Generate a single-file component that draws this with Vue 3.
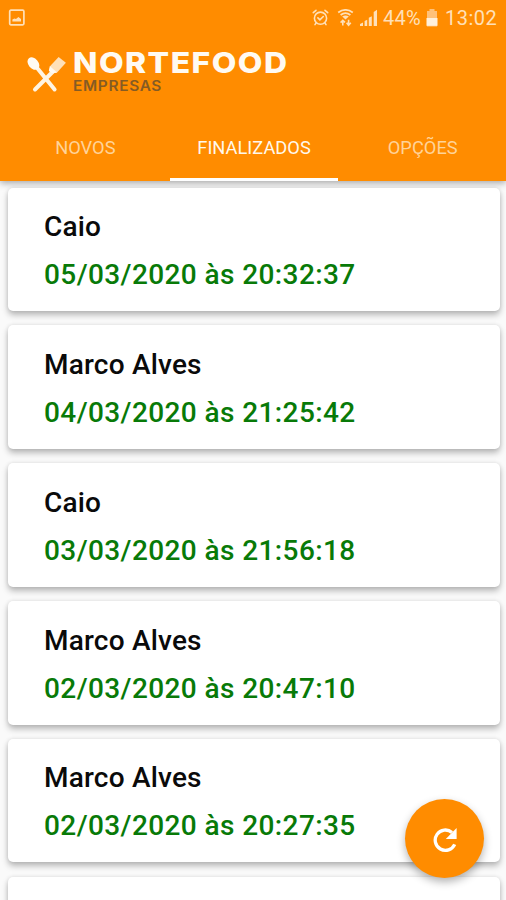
<script setup>
const tabs = [
  { label: 'NOVOS', active: false },
  { label: 'FINALIZADOS', active: true },
  { label: 'OPÇÕES', active: false },
]
const orders = [
  { name: 'Caio', date: '05/03/2020 às 20:32:37' },
  { name: 'Marco Alves', date: '04/03/2020 às 21:25:42' },
  { name: 'Caio', date: '03/03/2020 às 21:56:18' },
  { name: 'Marco Alves', date: '02/03/2020 às 20:47:10' },
  { name: 'Marco Alves', date: '02/03/2020 às 20:27:35' },
  { name: '', date: '' },
]
</script>

<template>
  <div class="screen">
    <header class="header">
      <div class="status">
        <svg class="shot" width="18" height="18" viewBox="0 0 18 18" fill="none">
          <rect x="1.7" y="1.2" width="14.2" height="14.6" rx="1.2" stroke="#ffe0b8" stroke-width="1.7" />
          <path d="M4.4 12.6V10.4l2-1 1.6.6 2.4-2 2.6 2v2.6z" fill="#ffe0b8" />
        </svg>
        <svg width="17" height="18" viewBox="0 0 17 18" fill="none" stroke="#ffe0b8" stroke-width="1.6" stroke-linecap="round">
          <circle cx="8.5" cy="9.2" r="6.1" />
          <path d="M1.3 3.7 4 1.3M15.7 3.7 13 1.3M4.2 13.8 3 15.6M12.8 13.8 14 15.6M5.9 8.9l2 2 3.4-3.4" />
        </svg>
        <svg class="wifi" width="17" height="18" viewBox="0 0 17 18" fill="none" stroke="#ffe0b8" stroke-width="1.8">
          <path d="M1.2 3.4Q8.5-1.6 15.8 3.4M3.6 5.9Q8.5 2.3 13.4 5.9" />
          <path d="M5.2 7.6Q8.5 5.4 11.8 7.6L8.5 10.6z" fill="#ffe0b8" stroke="none" />
          <path d="M5.8 16.6v-5.2M3.6 13.6 5.8 11.3 8 13.4M11.6 10.8v5.2M9.6 13.8l2 2.4 2.2-2.4" stroke-width="1.6" />
        </svg>
        <svg class="signal" width="18" height="18" viewBox="0 0 18 18" fill="#ffe0b8">
          <path d="M0 17v-2l3-1.5V17zM4.6 17v-5l2.6-1.3V17zM8.8 17V8.8l3-1.6V17zM13.7 17V3.1L17 .8V17z" />
        </svg>
        <span class="percent">44%</span>
        <svg class="battery" width="12" height="18" viewBox="0 0 12 18">
          <path d="M3.5 0h5v2H11v15.5H1V2h2.5z" fill="#ffc17a" />
          <path d="M.5 9h11v7.8H.5z" fill="#fff0dc" />
        </svg>
        <span class="clock">13:02</span>
      </div>
      <div class="brand">
        <svg class="cutlery" width="40" height="38" viewBox="0 0 40 38">
          <path d="m11 13 16.6 20.5M26.5 15 8 33.5" stroke="#fff4e2" stroke-width="4" stroke-linecap="round" />
          <ellipse cx="6.4" cy="7.6" rx="5" ry="7" transform="rotate(-40 6.4 7.6)" fill="#fffaf2" />
          <path d="m23 10.3 8.6-9.4 7.3 5.9-8.8 9.7-5.2 1.1-3-2.8z" fill="#ffe0b8" />
          <path d="m23 10.3 7.1 6.2-5.2 1.1-3-2.8z" fill="#fffaf2" />
        </svg>
        <div class="wordmark">
          <div class="title">NORTEFOOD</div>
          <div class="subtitle">EMPRESAS</div>
        </div>
      </div>
      <nav class="tabs">
        <div v-for="tab in tabs" :key="tab.label" class="tab" :class="{ active: tab.active }">{{ tab.label }}</div>
      </nav>
    </header>
    <main class="list">
      <article v-for="(order, i) in orders" :key="i" class="card">
        <div class="name">{{ order.name }}</div>
        <div class="date">{{ order.date }}</div>
      </article>
    </main>
    <button class="fab" aria-label="Atualizar">
      <svg width="26" height="26" viewBox="0 0 26 26">
        <path d="M22.7 17.4A10.2 10.2 0 1 1 20 5.4" fill="none" stroke="#fff" stroke-width="3.3" />
        <path d="M24.6 1v11H13.8z" fill="#fff" />
      </svg>
    </button>
  </div>
</template>

<style>
body {
  margin: 0;
  overflow: hidden;
}
</style>

<style scoped>
.screen {
  position: relative;
  width: 506px;
  height: 900px;
  overflow: hidden;
  background: #fafafa;
  font-family: Roboto, sans-serif;
}
.header {
  height: 180.5px;
  background: #ff8c00;
  box-shadow: 0 2px 7px rgba(0, 0, 0, 0.35);
  box-sizing: border-box;
}
.status {
  display: flex;
  align-items: center;
  height: 36px;
  padding: 0 9px 0 8px;
  color: #ffe0b8;
  font-size: 20px;
}
.shot {
  margin-right: auto;
}
.wifi {
  margin-left: 8px;
}
.signal {
  margin-left: 6px;
}
.percent {
  margin-left: 5px;
  width: 40px;
  letter-spacing: 0.2px;
}
.battery {
  margin-left: 3px;
}
.clock {
  margin-left: 7px;
  width: 52px;
  letter-spacing: 0.5px;
}
.brand {
  display: flex;
  height: 78px;
  padding: 10px 0 0 27px;
  box-sizing: border-box;
}
.cutlery {
  margin: 10px 6px 0 0;
}
.wordmark {
  font-family: Inter, sans-serif;
  white-space: nowrap;
}
.title {
  margin-top: 1px;
  line-height: 32px;
  font-size: 28.5px;
  font-weight: 800;
  letter-spacing: 1.3px;
  color: #fffaf2;
  transform: scaleX(1.12);
  transform-origin: left center;
}
.subtitle {
  line-height: 14px;
  font-size: 14px;
  font-weight: 600;
  letter-spacing: 0.6px;
  color: #855b24;
  transform: scaleX(1.1);
  transform-origin: left center;
}
.tabs {
  display: grid;
  grid-template-columns: repeat(3, 168.7px);
  height: 66.5px;
  padding-left: 1px;
}
.tab {
  box-sizing: border-box;
  height: 66.5px;
  border-bottom: 3.5px solid transparent;
  line-height: 67px;
  font-size: 18.3px;
  text-align: center;
  color: #ffd399;
}
.tab.active {
  color: #fff8ec;
  border-bottom-color: #fff;
}
.list {
  display: flex;
  flex-direction: column;
  gap: 14.3px;
  padding: 7.2px 6px 0 8px;
}
.card {
  flex: none;
  box-sizing: border-box;
  height: 123.5px;
  padding: 21.5px 36px 0;
  background: #fff;
  border-radius: 5px;
  box-shadow: 0 4px 6px rgba(0, 0, 0, 0.26), 0 0 4px rgba(0, 0, 0, 0.1);
  font-size: 28px;
  font-weight: 500;
  white-space: nowrap;
}
.name {
  height: 36px;
  line-height: 36px;
  letter-spacing: 0.2px;
  color: #0a0a0a;
}
.date {
  margin-top: 12px;
  line-height: 36px;
  letter-spacing: 0.4px;
  color: #087a08;
}
.fab {
  position: absolute;
  left: 405px;
  top: 799px;
  display: flex;
  align-items: center;
  justify-content: center;
  width: 79px;
  height: 79px;
  padding: 3px 0 0;
  border: 0;
  border-radius: 50%;
  background: #ff8c00;
  box-shadow: 0 4px 9px rgba(0, 0, 0, 0.3);
}
</style>
